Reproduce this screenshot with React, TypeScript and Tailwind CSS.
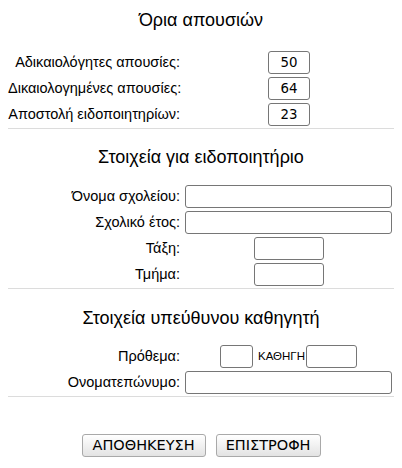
const LIMITS = [
  { label: 'Αδικαιολόγητες απουσίες:', value: '50' },
  { label: 'Δικαιολογημένες απουσίες:', value: '64' },
  { label: 'Αποστολή ειδοποιητηρίων:', value: '23' },
];

const inputCls =
  "h-[23px] rounded-[3px] border border-[#767676] bg-white px-[2px] text-center font-['DejaVu_Sans',sans-serif] text-[13.33px] text-black outline-none";

function Row({ label, children }: { label: string; children: React.ReactNode }) {
  return (
    <div className="flex h-[23px] items-center">
      <div className="w-[172px] shrink-0 whitespace-nowrap text-right text-[14.5px]">{label}</div>
      <div className="ml-[5px] flex flex-1 justify-center pr-[2px]">{children}</div>
    </div>
  );
}

function Title({ children, className }: { children: React.ReactNode; className: string }) {
  return <h3 className={`text-center text-[18px] leading-[22px] ${className}`}>{children}</h3>;
}

export default function App() {
  return (
    <div className="w-[402px] bg-white px-2 font-['Liberation_Sans',Arial,sans-serif] text-black">
      <Title className="pt-[9px]">Όρια απουσιών</Title>
      <div className="mt-[20px] flex flex-col gap-[3px]">
        {LIMITS.map((l) => (
          <Row key={l.label} label={l.label}>
            <input className={`${inputCls} ml-[1px] w-[42px]`} defaultValue={l.value} />
          </Row>
        ))}
      </div>
      <hr className="mt-[2px] border-t border-[#dcdcdc]" />

      <Title className="mt-[17px]">Στοιχεία για ειδοποιητήριο</Title>
      <div className="mt-[17px] flex flex-col gap-[3px]">
        <Row label="Όνομα σχολείου:">
          <input className={`${inputCls} w-full`} />
        </Row>
        <Row label="Σχολικό έτος:">
          <input className={`${inputCls} w-full`} />
        </Row>
        <Row label="Τάξη:">
          <input className={`${inputCls} w-[70px]`} />
        </Row>
        <Row label="Τμήμα:">
          <input className={`${inputCls} w-[70px]`} />
        </Row>
      </div>
      <hr className="mt-[2px] border-t border-[#dcdcdc]" />

      <Title className="mt-[18px]">Στοιχεία υπεύθυνου καθηγητή</Title>
      <div className="mt-[16px] flex flex-col gap-[3px]">
        <Row label="Πρόθεμα:">
          <div className="flex items-center">
            <input className={`${inputCls} w-[33px]`} />
            <span className="mx-[5px] mr-[1px] text-[11.5px]">ΚΑΘΗΓΗ</span>
            <input className={`${inputCls} w-[51px]`} />
          </div>
        </Row>
        <Row label="Ονοματεπώνυμο:">
          <input className={`${inputCls} w-full`} />
        </Row>
      </div>
      <hr className="mt-[2px] border-t border-[#dcdcdc]" />

      <div className="mt-[37px] flex justify-center gap-[10px] pb-[11px]">
        <button className="h-[23px] rounded-[3px] border border-[#a9a9a9] bg-gradient-to-b from-white to-[#e3e3e3] px-[10px] font-['DejaVu_Sans',sans-serif] text-[14.5px] leading-none text-black">
          ΑΠΟΘΗΚΕΥΣΗ
        </button>
        <button className="h-[23px] rounded-[3px] border border-[#a9a9a9] bg-gradient-to-b from-white to-[#e3e3e3] px-[9px] font-['DejaVu_Sans',sans-serif] text-[14.5px] leading-none text-black">
          ΕΠΙΣΤΡΟΦΗ
        </button>
      </div>
    </div>
  );
}
